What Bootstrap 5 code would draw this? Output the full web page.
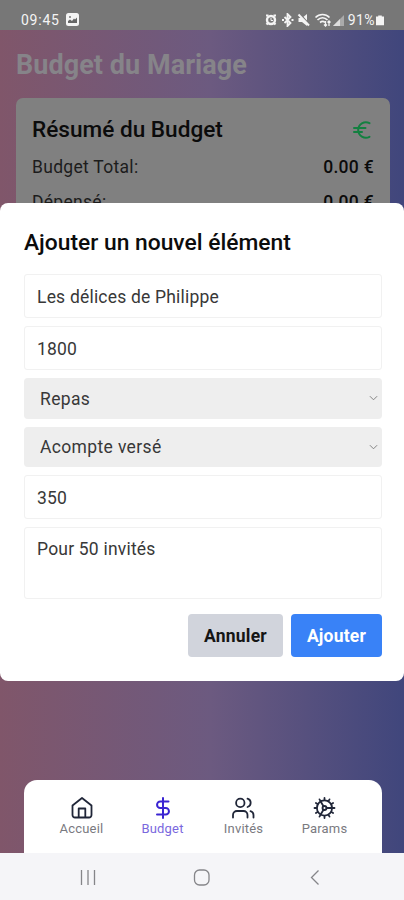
<!DOCTYPE html>
<html lang="fr">
<head>
<meta charset="utf-8">
<meta name="viewport" content="width=device-width, initial-scale=1">
<title>Budget du Mariage</title>
<link href="https://cdn.jsdelivr.net/npm/bootstrap@5.3.0/dist/css/bootstrap.min.css" rel="stylesheet">
<style>
body{font-family:Roboto,"Liberation Sans",sans-serif;background:#777;color:#111}
.phone{width:404px;height:900px;overflow:hidden}
.status{height:30px;background:#777;color:#f4f4f4;font-size:14px;line-height:18px;padding:11px 20px 0 21px}
.status svg{display:block;margin-top:2px}
.status .clock{letter-spacing:.75px}
.status .photo{margin-left:6px}
.status .pct{letter-spacing:.4px;margin-right:1px}
.status .glyphs{margin-right:-1px}
.app{background:linear-gradient(90deg,#80566a 0%,#6c5a80 52%,#40467c 100%)}
.app h1{font-size:27px;line-height:32px;font-weight:700;color:#868489;letter-spacing:.05px;margin:0;padding:19px 16px 0}
.summary{margin:17px 14px 0 16px;padding:17px 16px;height:200px;border-radius:7px;background:#808080;color:#0b0b0b}
.summary h2{font-size:22.600px;line-height:30px;font-weight:500;margin:0}
.line{font-size:17.500px;line-height:24px;margin-top:11px;letter-spacing:.3px}
.line span{color:#1c1c1c}
.first{margin-top:10px}
.line b{font-weight:500}
.sheet{top:173px;left:0;right:0;height:478px;border-radius:8px;background:#fff;padding:25px 22px 24px 24px}
.sheet h3{font-size:22.800px;line-height:30px;font-weight:500;margin:0 0 16px;color:#0c0c0c}
.sheet .form-control{height:44px;border:1px solid #f1f1f1;border-radius:3px;padding:1px 12px 0;font-size:17.500px;letter-spacing:.2px;color:#383838;background:#fff}
.sheet textarea.form-control{height:72px;padding:8px 12px;min-height:0;resize:none}
.sheet .form-select{height:40.500px;border:0;border-radius:4px;background-color:#eee;padding:1px 24px 0 16px;font-size:17.500px;letter-spacing:.35px;color:#383838;
background-image:url("data:image/svg+xml,%3Csvg xmlns='http://www.w3.org/2000/svg' viewBox='0 0 10 6'%3E%3Cpath d='M1 1l4 4 4-4' fill='none' stroke='%23777' stroke-width='1'/%3E%3C/svg%3E");background-size:9px 6px;background-position:right 4px center}
.sheet .btn{height:43px;padding:1px 0 0;border:0;border-radius:4px;font-size:17.500px;font-weight:700;letter-spacing:.2px}
.actions{margin-top:15px}
.cancel,.cancel:hover{width:95px;background:#d1d4dc;color:#151515}
.confirm,.confirm:hover{width:91px;background:#3982f7;color:#fff}
.tabs{margin:0 22px 0 24px;height:73px;border-radius:13px 13px 0 0;background:#fff;padding:16px 16px 0 17px}
.tab{width:81px;font-size:13px;line-height:16px;color:#7a7a7f;text-decoration:none;letter-spacing:.2px}
.tab svg{display:block;margin-bottom:1px;color:#202638}
.tab.on{color:#7a68de}
.tab.on svg{color:#3a24d2}
.sys{height:47px;background:#f5f5f8;color:#858589}
.sys svg{display:block}
</style>
<script src="https://cdn.jsdelivr.net/npm/bootstrap@5.3.0/dist/js/bootstrap.bundle.min.js"></script>
</head>
<body>
<div class="phone d-flex flex-column">
  <header class="status d-flex justify-content-between">
    <div class="d-flex">
      <span class="clock">09:45</span>
      <svg class="photo" width="13" height="13" viewBox="0 0 13 13"><rect width="13" height="13" rx="2.500" fill="#f4f4f4"/><path d="M2 10V8l2-1.500 2 1.500 2-2.500 1 1 2-2V10z" fill="#666"/><circle cx="4" cy="4" r="1" fill="#777"/></svg>
    </div>
    <div class="d-flex">
      <svg class="glyphs" width="84" height="14" viewBox="0 0 84 14" fill="none" stroke="#f4f4f4">
        <circle cx="6" cy="7" r="4" stroke-width="2.400"/><path d="M1 2.500h2.500M8.500 2.500H11M1.500 11.500L3 10M10.500 11.500L9 10" stroke-width="2.200"/><path d="M6 5v2.500h2"/>
        <path d="M19.500 4l6 6-3 3V1l3 3-6 6" stroke-width="1.800"/><path d="M17 7h2M26.500 7h2" stroke-width="2.200"/>
        <path d="M33.500 5h3.500l5-4v12l-5-4h-3.500z" fill="#f4f4f4" stroke="none"/><path d="M34.500 .5l10 11" stroke="#777" stroke-width="1.500"/><path d="M33.500 1.500l10.500 11" stroke-width="2"/>
        <path d="M50.500 4.500c4-4 10-4 14 0M52.500 7c3-3 7-3 10 0M55 9.500c2-1.500 3.500-1.500 5 0" stroke-width="1.700"/><path d="M60.500 8v5M59 11.500l1.500 1.500 1.500-1.500M64 13V8M62.500 9.500L64 8l1.500 1.500" stroke-width="1.300"/>
        <path d="M79 2v11H68z" fill="#aaa" stroke="none"/><path d="M75 6v7h-7z" fill="#ddd" stroke="none"/>
      </svg>
      <span class="pct">91%</span>
      <svg width="8" height="14" viewBox="0 0 9 14"><path d="M2.500 2h4v1H9v10H0V3h2.500z" fill="#f4f4f4"/></svg>
    </div>
  </header>

  <main class="app position-relative flex-grow-1 d-flex flex-column">
    <h1>Budget du Mariage</h1>
    <section class="summary">
      <div class="d-flex justify-content-between align-items-center">
        <h2>Résumé du Budget</h2>
        <svg width="24" height="24" viewBox="0 0 24 24" fill="none" stroke="#138040" stroke-width="2" stroke-linecap="round" stroke-linejoin="round"><path d="M4 10h11.500M4 14h8M19.500 5.200A7.700 7.700 0 1 0 19.500 18.800"/></svg>
      </div>
      <div class="line first d-flex justify-content-between"><span>Budget Total:</span><b>0.00 €</b></div>
      <div class="line d-flex justify-content-between"><span>Dépensé:</span><b>0.00 €</b></div>
    </section>

    <form class="sheet position-absolute z-1">
      <h3>Ajouter un nouvel élément</h3>
      <div class="d-flex flex-column gap-2">
        <input class="form-control" type="text" value="Les délices de Philippe" aria-label="Nom">
        <input class="form-control" type="text" value="1800" aria-label="Montant">
        <select class="form-select" aria-label="Catégorie"><option>Repas</option></select>
        <select class="form-select" aria-label="Statut"><option>Acompte versé</option></select>
        <input class="form-control" type="text" value="350" aria-label="Acompte">
        <textarea class="form-control" aria-label="Notes">Pour 50 invités</textarea>
      </div>
      <div class="actions d-flex justify-content-end gap-2">
        <button class="btn cancel" type="button">Annuler</button>
        <button class="btn confirm" type="button">Ajouter</button>
      </div>
    </form>

    <nav class="tabs d-flex mt-auto">
      <a class="tab d-flex flex-column align-items-center" href="#"><svg width="24" height="24" viewBox="0 0 24 24" fill="none" stroke="currentColor" stroke-width="1.800" stroke-linejoin="round"><path d="M2.500 9.500L12 2l9.500 7.500V19a2.500 2.500 0 0 1-2.500 2.500H5A2.500 2.500 0 0 1 2.500 19z"/><path d="M8.700 21.500V12.500h6.600v9"/></svg><span>Accueil</span></a>
      <a class="tab on d-flex flex-column align-items-center" href="#"><svg width="24" height="24" viewBox="0 0 24 24" fill="none" stroke="currentColor" stroke-width="2" stroke-linecap="round"><path d="M12 2v20M17.500 5.500H9.300a3.200 3.200 0 0 0 0 6.500h5.400a3.200 3.200 0 0 1 0 6.500H6"/></svg><span>Budget</span></a>
      <a class="tab d-flex flex-column align-items-center" href="#"><svg width="24" height="24" viewBox="0 0 24 24" fill="none" stroke="currentColor" stroke-width="1.800" stroke-linecap="round"><path d="M15.500 21.500v-2.500a4 4 0 0 0-4-4h-6.500a4 4 0 0 0-4 4v2.500M21.500 21.500v-2.500a4 4 0 0 0-3-3.800M15.500 2.700a4.300 4.300 0 0 1 0 8.300"/><circle cx="8.300" cy="6.900" r="4.200"/></svg><span>Invités</span></a>
      <a class="tab d-flex flex-column align-items-center" href="#"><svg width="24" height="24" viewBox="0 0 24 24" fill="none" stroke="currentColor" stroke-width="1.800" stroke-linecap="round"><circle cx="11.500" cy="12" r="7.600"/><circle cx="11.500" cy="12" r="2"/><path d="M11.500 2v2M11.500 20v2M1.500 12h2M13.500 12h8M16.500 3.400l-1 1.700M10.500 10.300l-3-5.100M6.500 3.400l1 1.700M10.500 13.700l-3 5.100M6.500 20.600l1-1.700M16.500 20.600l-1-1.700M20.100 17l-1.700-1M2.900 7l1.700 1M20.100 7l-1.700 1M2.900 17l1.700-1"/></svg><span>Params</span></a>
    </nav>
  </main>

  <footer class="sys d-flex align-items-center">
    <svg width="404" height="47" viewBox="0 0 404 47" fill="none" stroke="currentColor" stroke-width="1.300"><path d="M81.500 17v15M88 17v15M94.500 17v15M318.500 17.500l-7 7 7 7"/><rect x="194.500" y="17" width="14.500" height="15" rx="5"/></svg>
  </footer>
</div>
</body>
</html>
